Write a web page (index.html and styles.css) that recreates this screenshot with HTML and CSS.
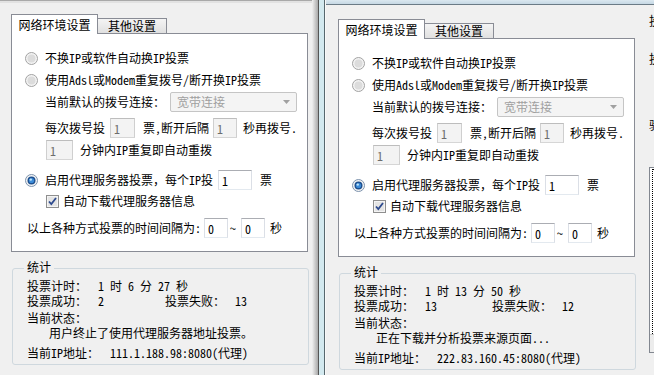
FILE: index.html
```html
<!DOCTYPE html>
<html lang="zh-CN">

<head>
    <meta charset="UTF-8" />
    <title>投票设置</title>
    <link rel="stylesheet" href="styles.css">
</head>

<body>
    <!-- left window -->
    <div class="window window-left">
        <div class="dialog">
            <div class="tabs">
                <div class="tab active">网络环境设置</div>
                <div class="tab">其他设置</div>
                <div class="tab-fill"></div>
            </div>
            <div class="tab-panel">
                <div class="row">
                    <svg class="radio" width="13" height="13" viewBox="0 0 13 13"><circle cx="6.5" cy="6.5" r="6" fill="#f3f3f3" stroke="#a2a2a2"/><circle cx="6.5" cy="6.5" r="4" fill="#dcdcdc"/></svg>
                    <span>不换IP或软件自动换IP投票</span>
                </div>
                <div class="row">
                    <svg class="radio" width="13" height="13" viewBox="0 0 13 13"><circle cx="6.5" cy="6.5" r="6" fill="#f3f3f3" stroke="#a2a2a2"/><circle cx="6.5" cy="6.5" r="4" fill="#dcdcdc"/></svg>
                    <span>使用Adsl或Modem重复拨号/断开换IP投票</span>
                </div>
                <div class="row sub">
                    <span>当前默认的拨号连接：</span>
                    <div class="combo">
                        <span>宽带连接</span>
                        <svg width="7" height="4" viewBox="0 0 7 4"><path d="M0 0h7L3.5 4z" fill="#a0a0a0"/></svg>
                    </div>
                </div>
                <div class="row sub gap-dial">
                    <span>每次拨号投</span>
                    <input class="box w25 ml5" value="1" disabled>
                    <span class="ml8">票,断开后隔</span>
                    <input class="box w24 ml4" value="1" disabled>
                    <span class="ml6">秒再拨号.</span>
                </div>
                <div class="row sub2">
                    <input class="box w27" value="1" disabled>
                    <span class="ml7">分钟内IP重复即自动重拨</span>
                </div>
                <div class="row gap-proxy">
                    <svg class="radio" width="13" height="13" viewBox="0 0 13 13"><circle cx="6.5" cy="6.5" r="6" fill="#f3f3f3" stroke="#7d93ad"/><circle cx="6.5" cy="6.5" r="4" fill="#1d4f8e"/><circle cx="6.5" cy="6.5" r="2.6" fill="#3b8bd8"/><circle cx="5.8" cy="5.6" r="1.2" fill="#bfe5fb"/></svg>
                    <span>启用代理服务器投票，每个IP投</span>
                    <input class="box w34 ml5" value="1">
                    <span class="ml8">票</span>
                </div>
                <div class="row sub2 short">
                    <svg class="check" width="13" height="13" viewBox="0 0 13 13"><rect x="0.5" y="0.5" width="12" height="12" fill="#f4f4f4" stroke="#8f8f8f"/><rect x="2" y="2" width="9" height="9" fill="#e4e4e4"/><path d="M3 6.5 5.3 9 10 3" fill="none" stroke="#2d4a8e" stroke-width="1.8"/></svg>
                    <span>自动下载代理服务器信息</span>
                </div>
                <div class="row interval">
                    <span>以上各种方式投票的时间间隔为:</span>
                    <input class="box w24 ml3" value="0">
                    <span class="ml2">~</span>
                    <input class="box w24 ml5" value="0">
                    <span class="ml5">秒</span>
                </div>
            </div>
            <div class="stats">
                <div class="stats-title">统计</div>
                <div class="stat first"><span class="k">投票计时：</span><span>1 时 6 分 27 秒</span></div>
                <div class="stat"><span class="k">投票成功：</span><span class="v">2</span><span class="k2">投票失败：</span><span>13</span></div>
                <div class="stat gap2">当前状态：</div>
                <div class="stat msg">用户终止了使用代理服务器地址投票。</div>
                <div class="stat gap5"><span class="k3">当前IP地址：</span><span>111.1.188.98:8080(代理)</span></div>
            </div>
        </div>
    </div>

    <div class="frame"></div>

    <!-- right window -->
    <div class="window window-right">
        <div class="dialog">
            <div class="tabs">
                <div class="tab active">网络环境设置</div>
                <div class="tab">其他设置</div>
                <div class="tab-fill"></div>
            </div>
            <div class="tab-panel">
                <div class="row">
                    <svg class="radio" width="13" height="13" viewBox="0 0 13 13"><circle cx="6.5" cy="6.5" r="6" fill="#f3f3f3" stroke="#a2a2a2"/><circle cx="6.5" cy="6.5" r="4" fill="#dcdcdc"/></svg>
                    <span>不换IP或软件自动换IP投票</span>
                </div>
                <div class="row">
                    <svg class="radio" width="13" height="13" viewBox="0 0 13 13"><circle cx="6.5" cy="6.5" r="6" fill="#f3f3f3" stroke="#a2a2a2"/><circle cx="6.5" cy="6.5" r="4" fill="#dcdcdc"/></svg>
                    <span>使用Adsl或Modem重复拨号/断开换IP投票</span>
                </div>
                <div class="row sub">
                    <span>当前默认的拨号连接：</span>
                    <div class="combo">
                        <span>宽带连接</span>
                        <svg width="7" height="4" viewBox="0 0 7 4"><path d="M0 0h7L3.5 4z" fill="#a0a0a0"/></svg>
                    </div>
                </div>
                <div class="row sub gap-dial">
                    <span>每次拨号投</span>
                    <input class="box w25 ml5" value="1" disabled>
                    <span class="ml8">票,断开后隔</span>
                    <input class="box w24 ml4" value="1" disabled>
                    <span class="ml6">秒再拨号.</span>
                </div>
                <div class="row sub2">
                    <input class="box w27" value="1" disabled>
                    <span class="ml7">分钟内IP重复即自动重拨</span>
                </div>
                <div class="row gap-proxy">
                    <svg class="radio" width="13" height="13" viewBox="0 0 13 13"><circle cx="6.5" cy="6.5" r="6" fill="#f3f3f3" stroke="#7d93ad"/><circle cx="6.5" cy="6.5" r="4" fill="#1d4f8e"/><circle cx="6.5" cy="6.5" r="2.6" fill="#3b8bd8"/><circle cx="5.8" cy="5.6" r="1.2" fill="#bfe5fb"/></svg>
                    <span>启用代理服务器投票，每个IP投</span>
                    <input class="box w34 ml5" value="1">
                    <span class="ml8">票</span>
                </div>
                <div class="row sub2 short">
                    <svg class="check" width="13" height="13" viewBox="0 0 13 13"><rect x="0.5" y="0.5" width="12" height="12" fill="#f4f4f4" stroke="#8f8f8f"/><rect x="2" y="2" width="9" height="9" fill="#e4e4e4"/><path d="M3 6.5 5.3 9 10 3" fill="none" stroke="#2d4a8e" stroke-width="1.8"/></svg>
                    <span>自动下载代理服务器信息</span>
                </div>
                <div class="row interval">
                    <span>以上各种方式投票的时间间隔为:</span>
                    <input class="box w24 ml3" value="0">
                    <span class="ml2">~</span>
                    <input class="box w24 ml5" value="0">
                    <span class="ml5">秒</span>
                </div>
            </div>
            <div class="stats">
                <div class="stats-title">统计</div>
                <div class="stat first"><span class="k">投票计时：</span><span>1 时 13 分 50 秒</span></div>
                <div class="stat"><span class="k">投票成功：</span><span class="v">13</span><span class="k2">投票失败：</span><span>12</span></div>
                <div class="stat gap2">当前状态：</div>
                <div class="stat msg">正在下载并分析投票来源页面...</div>
                <div class="stat gap5"><span class="k3">当前IP地址：</span><span>222.83.160.45:8080(代理)</span></div>
            </div>
        </div>

        <!-- next column, cut off by the screen edge -->
        <div class="side">
            <div class="side-text">投</div>
            <div class="side-text t2">投</div>
            <div class="side-text t3">验</div>
            <div class="listbox">
                <div class="focus"></div>
                <div class="hscroll"></div>
            </div>
        </div>
    </div>
</body>

</html>
```

FILE: styles.css
```css
* {
    box-sizing: border-box;
}

html,
body {
    margin: 0;
}

body {
    width: 654px;
    height: 375px;
    overflow: hidden;
    display: flex;
    background: #f0f0f0;
    color: #000;
    font-family: "Noto Sans Mono CJK SC", "Noto Sans CJK SC", sans-serif;
    font-size: 12px;
    line-height: 14px;
}

.window {
    flex: none;
    height: 375px;
}

.window-left {
    width: 312px;
    padding: 14px 0 0 11px;
    background: linear-gradient(#a9a9a9 0 1px, #e2e2e2 1px 3px, #f0f0f0 3px);
}

/* aero border between the two windows */
.frame {
    flex: none;
    width: 14px;
    background: linear-gradient(to right, #f0f0f0 0, #a9a9a9 6px, #555 6px 7px, #d3e9ef 7px 12px, #57676d 12px 13px, #f9f9f9 13px);
}

.window-right {
    width: 328px;
    display: flex;
    align-items: flex-start;
    overflow: hidden;
    padding-left: 12px;
    background: linear-gradient(#dbe8f0 0, #c6d8e4 4px, #6b7b86 4px 5px, #f0f0f0 5px);
}

.window-right .dialog {
    margin-top: 19px;
}

.dialog {
    flex: none;
    width: 298px;
}

/* tabs */
.tabs {
    display: flex;
    align-items: flex-end;
    width: 297px;
    height: 20px;
}

.tab {
    width: 69px;
    height: 16px;
    text-align: center;
    border: 1px solid #898c95;
    border-left: none;
    background: linear-gradient(#f4f4f4, #e0e0e0);
}

.tab.active {
    width: 87px;
    height: 20px;
    padding-top: 3px;
    border-left: 1px solid #898c95;
    border-bottom: none;
    background: #fff;
}

.tab-fill {
    flex: 1;
    height: 1px;
    background: #898c95;
}

.tab-panel {
    width: 297px;
    height: 218px;
    padding-top: 13px;
    border: 1px solid #898c95;
    border-top: none;
    background: #fff;
}

/* rows */
.row {
    display: flex;
    align-items: center;
    height: 22px;
    white-space: nowrap;
}

.row .radio {
    flex: none;
    margin: 0 7px 0 13px;
}

.row .check {
    flex: none;
    margin-right: 4px;
}

.sub {
    padding-left: 33px;
}

.sub2 {
    padding-left: 34px;
}

.short {
    height: 20px;
}

.gap-dial {
    margin-top: 4px;
}

.gap-proxy {
    margin-top: 8px;
}

.interval {
    margin-top: 6px;
    padding-left: 15px;
}

.combo {
    display: flex;
    align-items: center;
    justify-content: space-between;
    width: 127px;
    height: 20px;
    margin-left: 5px;
    padding: 0 6px 0 6px;
    border: 1px solid #c5c5c5;
    border-radius: 2px;
    background: #f4f4f4;
    color: #a0a0a0;
}

.box {
    flex: none;
    height: 20px;
    margin: 0;
    padding: 0 0 0 3px;
    font: inherit;
    color: #000;
    background: #fff;
    border: 1px solid;
    border-color: #abadb3 #dbdfe6 #e3e9ef #dbdfe6;
    outline: none;
}

.box:disabled {
    color: #6d6d6d;
    background: #f3f3f3;
    border-color: #bdbdbd #cfcfcf #d6d6d6 #cfcfcf;
}

.w24 { width: 24px; }
.w25 { width: 25px; }
.w27 { width: 27px; }
.w34 { width: 34px; }
.ml2 { margin-left: 2px; }
.ml3 { margin-left: 3px; }
.ml4 { margin-left: 4px; }
.ml5 { margin-left: 5px; }
.ml6 { margin-left: 6px; }
.ml7 { margin-left: 7px; }
.ml8 { margin-left: 8px; }

/* stats group box */
.stats {
    width: 297px;
    height: 97px;
    margin: 16px 0 0 1px;
    padding: 0 0 0 14px;
    border: 1px solid #cfd8de;
    border-radius: 3px;
}

/* title sits on the top border line and hides it */
.stats-title {
    width: fit-content;
    margin: -9px 0 0 -3px;
    padding: 0 3px;
    background: #f0f0f0;
}

.stat {
    display: flex;
    height: 15px;
    line-height: 15px;
    white-space: nowrap;
}

.stat.first {
    margin-top: 4px;
}

.stat.gap2 {
    margin-top: 2px;
}

.stat.gap5 {
    margin-top: 5px;
}

.stat.msg {
    padding-left: 22px;
}

.k { width: 71px; }
.v { width: 67px; }
.k2 { width: 70px; }
.k3 { width: 83px; }

/* cut-off column on the far right */
.side {
    flex: none;
    width: 20px;
    margin: 14px 0 0 13px;
}

.side-text {
    white-space: nowrap;
}

.side-text.t2 {
    margin-top: 24px;
}

.side-text.t3 {
    margin-top: 52px;
}

.listbox {
    height: 186px;
    margin-top: 35px;
    border: 1px solid #828790;
    background: #fff;
}

.focus {
    height: 165px;
    margin: 1px 0 0 2px;
    border-left: 1px dotted #000;
    border-top: 1px dotted #000;
}

.hscroll {
    height: 18px;
    border-top: 1px solid #c8c8c8;
    background: #ececec;
}
```
